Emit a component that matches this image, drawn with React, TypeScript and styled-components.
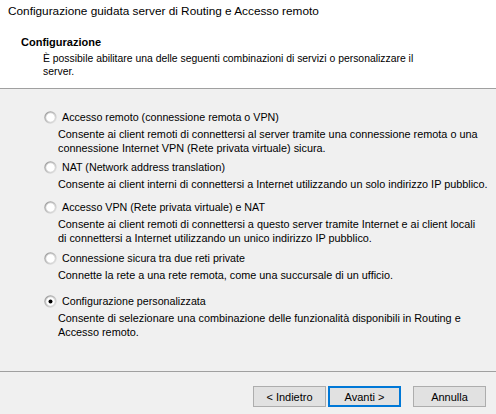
import React from 'react'
import styled, { createGlobalStyle } from 'styled-components'

const GlobalStyle = createGlobalStyle`
  html, body {
    margin: 0;
    padding: 0;
    background: #f0f0f0;
  }
  body {
    font-family: "Liberation Sans", Arial, sans-serif;
    color: #000;
  }
`

type OptionData = {
  label: string
  lines: string[]
  checked?: boolean
  gap: number
}

const options: OptionData[] = [
  {
    label: 'Accesso remoto (connessione remota o VPN)',
    lines: [
      'Consente ai client remoti di connettersi al server tramite una connessione remota o una',
      'connessione Internet VPN (Rete privata virtuale) sicura.',
    ],
    gap: 0,
  },
  {
    label: 'NAT (Network address translation)',
    lines: ['Consente ai client interni di connettersi a Internet utilizzando un solo indirizzo IP pubblico.'],
    gap: 4,
  },
  {
    label: 'Accesso VPN (Rete privata virtuale) e NAT',
    lines: [
      'Consente ai client remoti di connettersi a questo server tramite Internet e ai client locali',
      'di connettersi a Internet utilizzando un unico indirizzo IP pubblico.',
    ],
    gap: 8,
  },
  {
    label: 'Connessione sicura tra due reti private',
    lines: ['Connette la rete a una rete remota, come una succursale di un ufficio.'],
    gap: 5,
  },
  {
    label: 'Configurazione personalizzata',
    lines: [
      'Consente di selezionare una combinazione delle funzionalità disponibili in Routing e',
      'Accesso remoto.',
    ],
    checked: true,
    gap: 11,
  },
]

const Radio = ({ checked }: { checked?: boolean }) => (
  <RadioBox width="13" height="13" viewBox="0 0 13 13">
    <defs>
      <linearGradient id="rg" x1="0" y1="0" x2="1" y2="1">
        <stop offset="0" stopColor="#8e8e8e" />
        <stop offset="1" stopColor="#f2f2f2" />
      </linearGradient>
    </defs>
    <circle cx="6.5" cy="6.5" r="6.2" fill="url(#rg)" />
    <circle cx="6.5" cy="6.5" r="4.7" fill="#fff" stroke="#cfcfcf" strokeWidth="0.8" />
    {checked && <circle cx="6.5" cy="6.5" r="2" fill="#000" />}
  </RadioBox>
)

const App = () => {
  return (
    <>
      <GlobalStyle />
      <Window>
        <TitleBar>Configurazione guidata server di Routing e Accesso remoto</TitleBar>
        <Header>
          <HeaderTitle>Configurazione</HeaderTitle>
          <HeaderText>
            È possibile abilitare una delle seguenti combinazioni di servizi o personalizzare il
            <br />
            server.
          </HeaderText>
        </Header>
        <Body>
          {options.map((o) => (
            <Option key={o.label} gap={o.gap}>
              <OptionLabel>
                <Radio checked={o.checked} />
                <span>{o.label}</span>
              </OptionLabel>
              <OptionText>
                {o.lines.map((l) => (
                  <div key={l}>{l}</div>
                ))}
              </OptionText>
            </Option>
          ))}
        </Body>
        <Footer>
          <Button>&lt; Indietro</Button>
          <Button primary>Avanti &gt;</Button>
          <Button spaced>Annulla</Button>
        </Footer>
      </Window>
    </>
  )
}

export default App

const Window = styled.div`
  width: 496px;
  height: 414px;
  background: #f0f0f0;
  display: flex;
  flex-direction: column;
  overflow: hidden;
`

const TitleBar = styled.div`
  height: 22px;
  line-height: 22px;
  padding-left: 8px;
  background: #fff;
  font-size: 11.8px;
  white-space: nowrap;
`

const Header = styled.div`
  height: 67px;
  box-sizing: border-box;
  padding: 14px 0 0 21px;
  background: #fff;
  border-bottom: 1px solid #a0a0a0;
`

const HeaderTitle = styled.div`
  font-weight: bold;
  font-size: 11px;
  line-height: 13px;
`

const HeaderText = styled.div`
  margin-top: 3px;
  padding-left: 22px;
  font-size: 10.4px;
  line-height: 13px;
  white-space: nowrap;
`

const Body = styled.div`
  flex: 1;
  padding: 20px 0 0 44px;
`

const Option = styled.div<{ gap: number }>`
  margin-top: ${(p) => p.gap}px;
`

const OptionLabel = styled.div`
  height: 16px;
  display: flex;
  align-items: center;
  gap: 5px;
  font-size: 10.7px;
  white-space: nowrap;
`

const RadioBox = styled.svg`
  flex: none;
`

const OptionText = styled.div`
  margin-top: 2px;
  padding-left: 14px;
  font-size: 10.85px;
  line-height: 14px;
  white-space: nowrap;
`

const Footer = styled.div`
  height: 43px;
  box-sizing: border-box;
  border-top: 1px solid #a0a0a0;
  display: flex;
  justify-content: flex-end;
  align-items: flex-start;
  padding: 14px 10px 0 0;
  gap: 2px;
`

const Button = styled.button<{ primary?: boolean; spaced?: boolean }>`
  width: 73px;
  height: 21px;
  box-sizing: border-box;
  margin-left: ${(p) => (p.spaced ? '10px' : '0')};
  background: #e1e1e1;
  border: ${(p) => (p.primary ? '2px solid #0078d7' : '1px solid #adadad')};
  font-family: "Liberation Sans", Arial, sans-serif;
  font-size: 11px;
  color: #000;
  padding: 0;
`
